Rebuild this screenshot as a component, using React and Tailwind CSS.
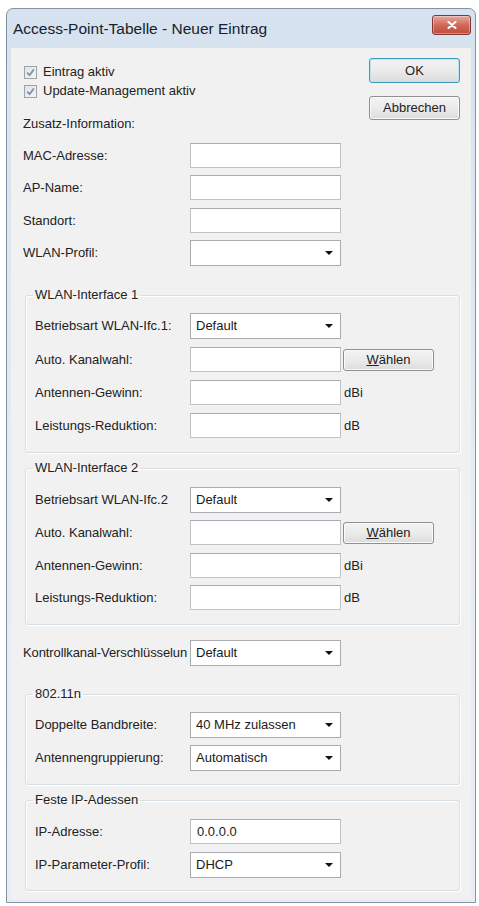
import React from "react";

const Arrow = () => (
  <svg width="8" height="4" viewBox="0 0 8 4">
    <path d="M0 0H8L4 4Z" fill="#111" />
  </svg>
);

function TextBox({ value, narrowPad = false }) {
  return (
    <div
      className={
        "w-[151px] h-[25px] bg-white border border-[#bfc2c8] border-t-[#a8abb2] flex items-center text-[#1a1a1a] " +
        (narrowPad ? "pl-[6px]" : "pl-[9px]")
      }
    >
      {value}
    </div>
  );
}

function Combo({ value }) {
  return (
    <div className="w-[151px] h-[26px] bg-white border border-[#a9acb2] flex items-center justify-between pl-[5px] pr-[7px] text-[#1a1a1a]">
      <span>{value}</span>
      <Arrow />
    </div>
  );
}

function Row({ label, children, className = "", inGroup = false, tight = false }) {
  return (
    <div className={"flex items-center " + className}>
      <span
        className={
          (inGroup ? "w-[155px]" : "w-[167px]") +
          " whitespace-nowrap overflow-hidden text-[#222] " +
          (tight ? "tracking-[-0.1px]" : "")
        }
      >
        {label}
      </span>
      {children}
    </div>
  );
}

function Group({ title, children, className = "" }) {
  return (
    <fieldset
      className={
        "ml-[2px] w-[435px] border border-[#d5dfe5] rounded-[3px] pl-[9px] shadow-[inset_1px_1px_0_#ffffff,1px_1px_0_#ffffff] " +
        className
      }
    >
      <legend className="-ml-[2px] px-[2px] h-[16px] leading-[16px] text-[#222]">
        {title}
      </legend>
      {children}
    </fieldset>
  );
}

function Check({ label, className = "" }) {
  return (
    <div className={"flex items-center h-[14px] ml-[1px] " + className}>
      <div className="w-[13px] h-[13px] border border-[#9ea3a8] bg-gradient-to-br from-[#e3e3e3] to-[#f5f5f5] flex items-center justify-center">
        <svg width="9" height="9" viewBox="0 0 9 9">
          <path
            d="M1.2 4.6 L3.6 7.2 L7.9 1.4"
            fill="none"
            stroke="#7f93ad"
            strokeWidth="1.8"
          />
        </svg>
      </div>
      <span className="ml-[6px] text-[#222]">{label}</span>
    </div>
  );
}

function WinButton({ children, focused = false, className = "" }) {
  return (
    <div
      className={
        "w-[91px] flex items-center justify-center rounded-[3px] bg-gradient-to-b from-[#f3f3f3] via-[#ebebeb] to-[#dcdcdc] text-[#222] " +
        (focused
          ? "border border-[#3c9bbd] shadow-[inset_0_0_0_1px_#b9e6f5] "
          : "border border-[#8e8f8f] shadow-[inset_0_0_0_1px_#fbfbfb] ") +
        className
      }
    >
      {children}
    </div>
  );
}

function Waehlen() {
  return (
    <WinButton className="w-[80px] h-[22px] ml-[2px]">
      <span>
        <span className="underline">W</span>ählen
      </span>
    </WinButton>
  );
}

function Unit({ children }) {
  return <span className="ml-[3px] text-[#222]">{children}</span>;
}

export default function App() {
  return (
    <div className="w-[479px] h-[906px] bg-white pt-[8px] pl-[6px] font-['Liberation_Sans',Arial,sans-serif] text-[13px] overflow-hidden">
      <div className="w-[470px] h-[895px] border border-[#8593a1] rounded-t-[7px] bg-gradient-to-b from-[#d6e2ef] via-[#e3ebf4] to-[#e8eef5] flex flex-col">
        {/* Title bar */}
        <div className="h-[39px] flex justify-between shrink-0">
          <div className="pl-[6px] flex items-center text-[15.5px] text-[#17212b]">
            Access-Point-Tabelle - Neuer Eintrag
          </div>
          <div className="mt-[6px] mr-[4px] w-[39px] h-[20px] rounded-[3px] border border-[#80392e] bg-gradient-to-b from-[#e6a99e] via-[#d0695a] to-[#c4493a] flex items-center justify-center shadow-[inset_0_0_0_1px_rgba(255,255,255,0.35)]">
            <svg width="10" height="8" viewBox="0 0 10 8">
              <path
                d="M1.5 1 L8.5 7 M8.5 1 L1.5 7"
                stroke="#ffffff"
                strokeWidth="2"
                strokeLinecap="round"
              />
            </svg>
          </div>
        </div>

        {/* Client area */}
        <div className="flex-1 mx-[4px] mb-[3px] bg-[#f1f1f1] pl-[12px] pr-[11px] pt-[10px]">
          <div className="flex justify-between">
            <div className="pt-[7px]">
              <Check label="Eintrag aktiv" />
              <Check label="Update-Management aktiv" className="mt-[5px]" />
              <div className="mt-[18px] h-[16px] leading-[16px] text-[#222]">
                Zusatz-Information:
              </div>
            </div>
            <div className="flex flex-col">
              <WinButton focused className="h-[25px]">
                OK
              </WinButton>
              <WinButton className="h-[24px] mt-[13px]">Abbrechen</WinButton>
            </div>
          </div>

          <Row label="MAC-Adresse:" className="mt-[11px]">
            <TextBox />
          </Row>
          <Row label="AP-Name:" className="mt-[7px]">
            <TextBox />
          </Row>
          <Row label="Standort:" className="mt-[8px]">
            <TextBox />
          </Row>
          <Row label="WLAN-Profil:" className="mt-[7px]">
            <Combo value="" />
          </Row>

          <Group title="WLAN-Interface 1" className="mt-[21px] pb-[14px]">
            <Row label="Betriebsart WLAN-Ifc.1:" inGroup className="mt-[10px]">
              <Combo value="Default" />
            </Row>
            <Row label="Auto. Kanalwahl:" inGroup className="mt-[8px]">
              <TextBox />
              <Waehlen />
            </Row>
            <Row label="Antennen-Gewinn:" inGroup className="mt-[8px]">
              <TextBox />
              <Unit>dBi</Unit>
            </Row>
            <Row label="Leistungs-Reduktion:" inGroup className="mt-[8px]">
              <TextBox />
              <Unit>dB</Unit>
            </Row>
          </Group>

          <Group title="WLAN-Interface 2" className="mt-[7px] pb-[14px]">
            <Row label="Betriebsart WLAN-Ifc.2" inGroup className="mt-[11px]">
              <Combo value="Default" />
            </Row>
            <Row label="Auto. Kanalwahl:" inGroup className="mt-[7px]">
              <TextBox />
              <Waehlen />
            </Row>
            <Row label="Antennen-Gewinn:" inGroup className="mt-[8px]">
              <TextBox />
              <Unit>dBi</Unit>
            </Row>
            <Row label="Leistungs-Reduktion:" inGroup className="mt-[7px]">
              <TextBox />
              <Unit>dB</Unit>
            </Row>
          </Group>

          <Row label="Kontrollkanal-Verschlüsselun" tight className="mt-[15px]">
            <Combo value="Default" />
          </Row>

          <Group title="802.11n" className="mt-[20px] pb-[13px]">
            <Row label="Doppelte Bandbreite:" inGroup className="mt-[10px]">
              <Combo value="40 MHz zulassen" />
            </Row>
            <Row label="Antennengruppierung:" inGroup className="mt-[7px]">
              <Combo value="Automatisch" />
            </Row>
          </Group>

          <Group title="Feste IP-Adessen" className="mt-[7px] pb-[12px]">
            <Row label="IP-Adresse:" inGroup className="mt-[11px]">
              <TextBox value="0.0.0.0" narrowPad />
            </Row>
            <Row label="IP-Parameter-Profil:" inGroup className="mt-[8px]">
              <Combo value="DHCP" />
            </Row>
          </Group>
        </div>
      </div>
    </div>
  );
}
